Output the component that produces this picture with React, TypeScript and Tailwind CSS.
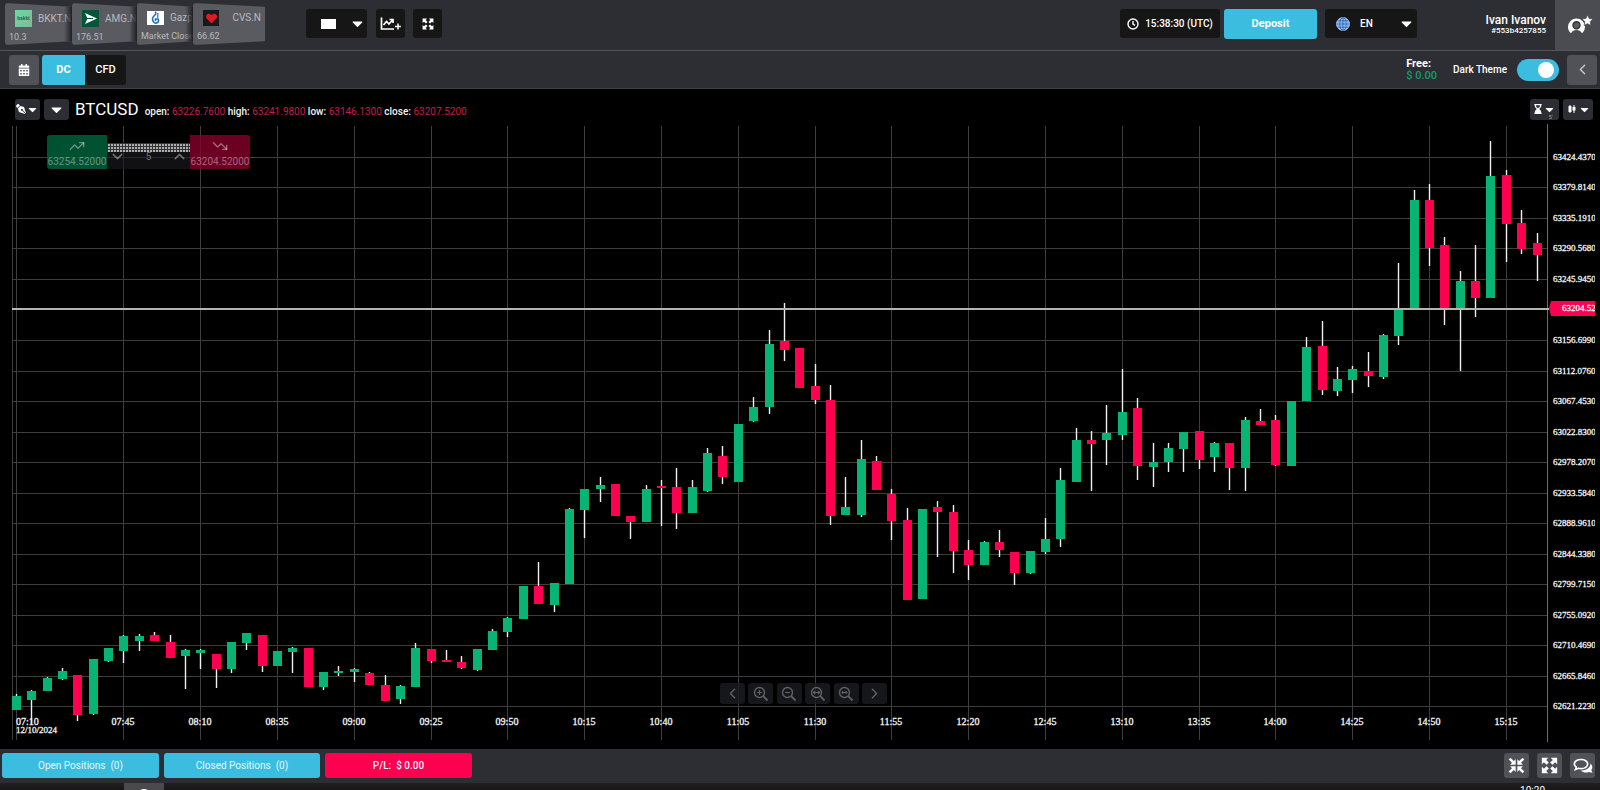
import type { ReactNode } from "react";
import { ChevronLeft, ChevronRight, ChevronDown, ChevronUp, TrendingDown, TrendingUp } from "lucide-react";
import { FaCalendarAlt, FaCaretDown, FaHeart, FaHourglassEnd, FaPenNib } from "react-icons/fa";
import { MdCandlestickChart } from "react-icons/md";

type Candle = ["G" | "R", number, number, number, number];

// Five-minute candles in chart units: colour, wick top, body top, body bottom, wick bottom.
const candles: Candle[] = [
  ["G", 694, 696, 710, 710], ["G", 690, 691, 700, 724], ["G", 677, 678, 691, 691], ["G", 668, 671, 679, 680],
  ["R", 675, 675, 715, 721], ["G", 659, 659, 714, 715], ["G", 648, 648, 661, 662], ["G", 635, 636, 651, 663],
  ["G", 634, 636, 641, 651], ["R", 632, 635, 641, 641], ["R", 635, 642, 658, 658], ["G", 649, 650, 656, 689],
  ["G", 649, 650, 653, 669], ["R", 654, 654, 669, 688], ["G", 642, 642, 669, 673], ["G", 633, 633, 643, 650],
  ["R", 635, 635, 666, 672], ["G", 651, 651, 666, 666], ["G", 647, 648, 652, 673], ["R", 648, 648, 687, 687],
  ["G", 672, 672, 687, 690], ["G", 666, 671, 673, 676], ["G", 668, 669, 672, 682], ["R", 672, 673, 685, 685],
  ["R", 675, 685, 701, 701], ["G", 685, 686, 699, 704], ["G", 643, 648, 687, 687], ["R", 649, 649, 661, 663],
  ["R", 650, 660, 662, 662], ["R", 656, 662, 668, 669], ["G", 649, 649, 670, 671], ["G", 629, 631, 650, 650],
  ["G", 617, 618, 632, 637], ["G", 586, 586, 619, 619], ["R", 562, 586, 604, 604], ["G", 583, 583, 605, 612],
  ["G", 508, 509, 584, 584], ["G", 489, 489, 510, 538], ["G", 477, 485, 489, 502], ["R", 484, 484, 516, 516],
  ["R", 516, 516, 522, 539], ["G", 485, 489, 522, 522], ["R", 480, 486, 488, 526], ["R", 468, 487, 513, 529],
  ["G", 480, 487, 513, 513], ["G", 448, 453, 491, 492], ["R", 446, 456, 477, 484], ["G", 424, 424, 482, 482],
  ["G", 397, 407, 421, 422], ["G", 330, 344, 407, 414], ["R", 303, 341, 350, 361], ["R", 348, 348, 388, 388],
  ["R", 364, 386, 400, 404], ["R", 385, 400, 516, 525], ["G", 477, 507, 515, 515], ["G", 440, 459, 515, 517],
  ["R", 456, 461, 490, 490], ["R", 489, 494, 521, 540], ["R", 508, 520, 600, 600], ["G", 509, 509, 599, 599],
  ["R", 501, 507, 512, 557], ["R", 505, 512, 551, 573], ["R", 540, 550, 565, 580], ["G", 541, 542, 565, 565],
  ["R", 530, 542, 550, 557], ["R", 552, 552, 573, 585], ["G", 551, 551, 573, 574], ["G", 518, 539, 552, 554],
  ["G", 468, 480, 539, 547], ["G", 428, 440, 482, 482], ["R", 431, 440, 444, 491], ["G", 405, 433, 440, 465],
  ["G", 369, 412, 435, 440], ["R", 398, 408, 466, 480], ["G", 443, 462, 467, 487], ["G", 443, 448, 462, 472],
  ["G", 432, 432, 449, 472], ["R", 431, 431, 460, 469], ["G", 442, 443, 457, 472], ["R", 443, 443, 468, 490],
  ["G", 417, 420, 468, 491], ["R", 409, 421, 425, 425], ["R", 415, 420, 465, 466], ["G", 401, 401, 466, 466],
  ["G", 337, 347, 401, 401], ["R", 321, 346, 390, 395], ["G", 367, 379, 391, 396], ["G", 366, 369, 380, 393],
  ["R", 352, 371, 376, 387], ["G", 334, 335, 377, 379], ["G", 263, 309, 336, 345], ["G", 190, 200, 309, 309],
  ["R", 184, 200, 248, 266], ["R", 237, 245, 310, 325], ["G", 271, 281, 309, 371], ["R", 245, 281, 298, 317],
  ["G", 141, 176, 298, 298], ["R", 170, 175, 224, 262], ["R", 210, 223, 249, 254], ["R", 233, 243, 255, 281],
];

const times = [
  "07:45", "08:10", "08:35", "09:00", "09:25", "09:50", "10:15", "10:40", "11:05", "11:30",
  "11:55", "12:20", "12:45", "13:10", "13:35", "14:00", "14:25", "14:50", "15:15",
];

const prices = [
  "63424.4370", "63379.8140", "63335.1910", "63290.5680", "63245.9450", "", "63156.6990", "63112.0760", "63067.4530",
  "63022.8300", "62978.2070", "62933.5840", "62888.9610", "62844.3380", "62799.7150", "62755.0920", "62710.4690",
  "62665.8460", "62621.2230",
];

const candleX = (i: number) => Math.round(15.9 + i * 15.36);
const priceY = (i: number) => Math.round(156.9 + i * 30.53);

function Chart() {
  return (
    <svg viewBox="0 123 1600 626" className="block h-auto w-full font-['Liberation_Serif',serif]" role="img" aria-label="BTCUSD candlestick chart">
      <defs>
        <clipPath id="priceScale">
          <rect x="1548" y="123" width="47" height="626" />
        </clipPath>
      </defs>
      <g fill="#3e3e3e">
        <rect x="12" y="126" width="1" height="614" />
        <rect x="16" y="126" width="1" height="614" />
        {times.map((t, i) => (
          <rect key={t} x={candleX(7 + i * 5)} y="126" width="1" height="614" />
        ))}
        {prices.map((p, i) => (p ? <rect key={p} x="12" y={priceY(i)} width="1535" height="1" /> : null))}
      </g>
      <rect x="1547" y="124" width="1" height="618" fill="#66707a" />
      {candles.map(([c, high, top, bottom, low], i) => (
        <g key={i}>
          <rect x={candleX(i) - 0.2} y={high} width="1.4" height={low - high} fill="#f0f0f0" />
          <rect x={candleX(i) - 4} y={top} width="9" height={bottom - top} fill={c === "G" ? "#08b374" : "#ff0050"} />
        </g>
      ))}
      <rect x="12" y="308" width="1537" height="2" fill="#b4b4b4" />
      <g fill="#f4f4f4" stroke="#f4f4f4" strokeWidth="0.3" fontSize="10">
        <text x="16" y="725">07:10</text>
        <text x="16" y="733" fontSize="9">12/10/2024</text>
        {times.map((t, i) => (
          <text key={t} x={candleX(7 + i * 5)} y="725" textAnchor="middle">{t}</text>
        ))}
        <g clipPath="url(#priceScale)" fontSize="9">
          {prices.map((p, i) => (p ? <text key={p} x="1553" y={priceY(i) + 3}>{p}</text> : null))}
          <path d="M1549 308l2-7h44v15h-44z" fill="#ff0050" stroke="none" />
          <text x="1562" y="311">63204.52</text>
        </g>
      </g>
    </svg>
  );
}

function Ticker({ logo, symbol, value, className, last = false }: { logo: ReactNode; symbol: string; value: string; className: string; last?: boolean }) {
  return (
    <a href="#" className={"relative h-[42px] overflow-hidden rounded-[3px] bg-[#595b60] text-[#b9babd] [clip-path:polygon(0_0,100%_9%,100%_91%,0_100%)] " + className}>
      <span className="flex items-center pt-[7px] pl-[10px] text-[10px] leading-4">
        {logo}
        <span className={"min-w-0 flex-1 whitespace-nowrap " + (last ? "pr-1 text-right" : "pl-[6px]")}>{symbol}</span>
      </span>
      <span className="block pt-[2px] pl-[4px] text-[9px] leading-4 whitespace-nowrap">{value}</span>
      {!last && <span className="absolute inset-y-0 right-0 w-2 bg-linear-to-r from-transparent to-[#1e1f22]" />}
    </a>
  );
}

function Arrows({ inward = false, className }: { inward?: boolean; className: string }) {
  const corner = inward ? "M9 9H2.500l2.200-2.200L.8 2.900 2.900.8l3.900 3.900L9 2.500z" : "M1 1h7.500L6.100 3.400 9.200 6.500 6.500 9.200 3.400 6.100 1 8.500z";
  return (
    <svg viewBox="0 0 20 20" fill="currentColor" className={className} aria-hidden="true">
      <path d={corner} />
      <path d={corner} transform="matrix(-1 0 0 1 20 0)" />
      <path d={corner} transform="matrix(1 0 0 -1 0 20)" />
      <path d={corner} transform="matrix(-1 0 0 -1 20 20)" />
    </svg>
  );
}

function Magnifier({ sign }: { sign: string }) {
  return (
    <svg viewBox="0 0 16 16" fill="none" stroke="currentColor" className="size-4" aria-hidden="true">
      <circle cx="6.500" cy="6.500" r="5" strokeWidth="1.400" />
      <path d="M10.200 10.200l4.300 4.300" strokeWidth="1.800" />
      <path d={sign} strokeWidth="1.200" />
    </svg>
  );
}

const magnifiers = [
  { label: "Zoom in", sign: "M4 6.500h5M6.500 4v5" },
  { label: "Zoom out", sign: "M4 6.500h5" },
  { label: "Fit width", sign: "M3.500 6.500h6M5 5L3.500 6.500 5 8M8 5l1.500 1.500L8 8" },
  { label: "Reset zoom", sign: "M3.500 6.500h6M4.800 5v3M8.200 5v3" },
];

const navButton = "flex h-[21px] w-[25px] items-center justify-center rounded-[3px] bg-[#1c1d20]/80 text-[#606164]";
const smallButton = "flex h-[21px] items-center justify-center rounded-[3px] bg-[#2d2e33]";
const footerIcon = "flex size-[25px] items-center justify-center rounded-[3px] bg-[#505258]";
const darkBox = "flex h-[29px] items-center justify-center rounded-[3px] bg-[#161616]";
const quote = "font-normal text-[#c41f46]";

export default function App() {
  return (
    <div className="flex min-h-screen flex-col bg-black font-['Roboto',sans-serif] text-white">
      <header className="flex h-[51px] items-stretch border-b border-[#55565a] bg-[#2d2e33]">
        <nav aria-label="Quotes" className="flex items-start pt-[3px] pl-[5px]">
          <Ticker className="w-[67px]" symbol="BKKT.N" value="10.3" logo={<span className="flex size-[17px] shrink-0 items-center justify-center bg-linear-to-br from-[#63dca0] to-[#86b59d] text-[5px] leading-none font-bold text-[#256b4a]">bakkt</span>} />
          <Ticker className="w-[65px]" symbol="AMG.N" value="176.51" logo={
            <svg viewBox="0 0 17 17" className="size-[17px] shrink-0"><rect width="17" height="17" fill="#06553b" /><path d="M3 3l12 5.500L3 14l2.500-5.500z" fill="#fff" /><path d="M5 8.500h6" stroke="#06553b" /></svg>
          } />
          <Ticker className="w-[56px]" symbol="Gazp" value="Market Close" logo={
            <svg viewBox="0 0 17 14" className="h-[14px] w-[17px] shrink-0"><rect width="17" height="14" fill="#fff" /><path d="M8 1c2 1.500 0 3-1.500 4.500C5 7 5 11 8 12c3 .5 4.500-2 3-4H8.500v2" stroke="#1c75bc" strokeWidth="1.600" fill="none" /><path d="M10.800 2v5" stroke="#1c75bc" strokeWidth="1.200" /></svg>
          } />
          <Ticker last className="w-[72px]" symbol="CVS.N" value="66.62" logo={<span className="flex size-4 shrink-0 items-center justify-center bg-[#17191c]"><FaHeart className="size-[11px] text-[#dd1b22]" /></span>} />
        </nav>

        <div className="ml-[41px] flex items-start gap-2 pt-[9px]">
          <button type="button" aria-label="Chart colour" className={darkBox + " w-[61px] gap-[13px] pl-[13px]"}>
            <span className="h-[10px] w-[15px] bg-white" />
            <FaCaretDown className="size-[17px]" />
          </button>
          <button type="button" aria-label="Add indicator" className={darkBox + " ml-px w-[29px]"}>
            <svg viewBox="0 0 22 16" className="h-4 w-[22px]" fill="none" stroke="currentColor" strokeWidth="1.700" aria-hidden="true">
              <path d="M1.500 1.500v11.500h12.500" /><path d="M3.500 9l3-3.500 2.500 2.500 3.500-4" /><path d="M9.500 3.500h3.500v3.500" /><path d="M15 10.500h6M18 7.500v6" strokeWidth="1.500" />
            </svg>
          </button>
          <button type="button" aria-label="Full screen" className={darkBox + " w-[29px]"}><Arrows className="size-3" /></button>
        </div>

        <div className="ml-auto flex items-start pt-[9px]">
          <div className={darkBox + " w-[100px] gap-[6px]"}>
            <svg viewBox="0 0 12 12" className="size-3" fill="none" stroke="currentColor" strokeWidth="1.400" aria-hidden="true"><circle cx="6" cy="6" r="5" /><path d="M6 3v3.200l2 1.200" /></svg>
            <time className="text-[10px] font-medium">15:38:30 (UTC)</time>
          </div>
          <button type="button" className="ml-1 h-[30px] w-[93px] rounded-[3px] bg-[#3bbddf] text-[11px] font-bold">Deposit</button>
          <div className={darkBox + " relative ml-2 w-[92px]"}>
            <svg viewBox="0 0 14 14" className="pointer-events-none absolute left-[11px] size-[14px]" fill="#8fbcf5" stroke="#2c5fa8" strokeWidth="0.800" aria-hidden="true">
              <circle cx="7" cy="7" r="6.500" stroke="#a9cbf7" /><ellipse cx="7" cy="7" rx="3.200" ry="6.500" fill="none" /><path d="M7 .5v13M.5 7h13M1.500 3.800h11M1.500 10.200h11" />
            </svg>
            <select aria-label="Language" defaultValue="EN" className="size-full appearance-none bg-transparent pl-[35px] text-[10px] font-medium">
              <option>EN</option>
            </select>
            <FaCaretDown className="pointer-events-none absolute right-[2px] size-[17px]" />
          </div>
          <div className="ml-[68px] flex w-[61px] flex-col items-end pt-[5px] whitespace-nowrap">
            <span className="text-[12px] leading-3 font-medium">Ivan Ivanov</span>
            <span className="text-[8px] leading-[9px] font-medium">#553b4257855</span>
          </div>
        </div>
        <button type="button" aria-label="Account" className="ml-[9px] flex w-[45px] items-center justify-center bg-[#4b4c51] pl-1">
          <svg viewBox="0 0 26 20" className="h-5 w-[26px]" aria-hidden="true">
            <path d="M9.500 3.500A8.500 8.500 0 0 0 1 12c0 2.300.9 4.300 2.300 5.800h12.400A8.500 8.500 0 0 0 18 12a8.500 8.500 0 0 0-8.500-8.500z" fill="#fff" />
            <path d="M4.500 18c.8-2.200 2.600-3 5-3s4.200.8 5 3z" fill="#4b4c51" />
            <circle cx="9.500" cy="10.300" r="3.500" fill="#5c5d62" stroke="#2f3035" strokeWidth="1.400" />
            <path d="M20.500 0l1.700 3.500 3.800.5-2.800 2.700.7 3.800-3.400-1.800-3.400 1.800.7-3.800L15 4l3.800-.5z" fill="#fff" stroke="#4b4c51" strokeWidth="0.800" />
          </svg>
        </button>
      </header>

      <div className="flex h-[38px] items-center border-b border-[#404145] bg-[#2d2e33] pr-[3px] pl-[9px]">
        <button type="button" aria-label="Calendar" className="flex size-[30px] items-center justify-center rounded-[3px] bg-[#505258]">
          <FaCalendarAlt className="size-3" />
        </button>
        <div className="ml-[3px] flex h-[30px] overflow-hidden rounded-[3px] text-[11px]">
          <button type="button" aria-pressed="true" className="w-[43px] bg-[#3bbddf] pt-px font-bold">DC</button>
          <button type="button" aria-pressed="false" className="w-[41px] bg-[#161616] pt-px font-medium">CFD</button>
        </div>
        <div className="ml-auto flex flex-col text-[11px] leading-3 font-bold">
          <span>Free:</span>
          <span className="font-medium text-[#159c67]">$ 0.00</span>
        </div>
        <label htmlFor="theme" className="ml-4 text-[10px] font-medium">Dark Theme</label>
        <input id="theme" type="checkbox" role="switch" defaultChecked className="ml-[10px] h-[22px] w-[42px] appearance-none rounded-full bg-[#55575c] p-[3px] before:block before:size-4 before:rounded-full before:bg-white before:content-[''] checked:bg-[#3bbddf] checked:before:ml-[18px]" />
        <button type="button" aria-label="Collapse panel" className="ml-2 flex size-[30px] items-center justify-center rounded-[3px] bg-[#505258] text-[#c8c9cb]">
          <ChevronLeft className="size-[17px]" />
        </button>
      </div>

      <main className="flex flex-1 flex-col">
        <div className="flex h-[34px] items-center pt-[6px] pr-[7px] pl-[15px]">
          <button type="button" aria-label="Drawing tools" className={smallButton + " w-[25px]"}><FaPenNib className="size-[10px] -scale-x-100" /><FaCaretDown className="size-[13px]" /></button>
          <button type="button" aria-label="Choose instrument" className={smallButton + " ml-1 w-[25px]"}><FaCaretDown className="size-[17px]" /></button>
          <h1 className="ml-[6px] text-[17px] leading-5">BTCUSD</h1>
          <p className="ml-[6px] pt-[5px] text-[10px] leading-3 font-medium whitespace-nowrap text-[#f2f2f2]">
            open: <span className={quote}>63226.7600</span> high: <span className={quote}>63241.9800</span> low:{" "}
            <span className={quote}>63146.1300</span> close: <span className={quote}>63207.5200</span>
          </p>
          <button type="button" aria-label="Time frame, 5 minutes" className={smallButton + " relative ml-auto w-[29px]"}>
            <FaHourglassEnd className="size-[10px]" /><FaCaretDown className="size-[13px]" />
            <span className="absolute right-[6px] bottom-0 text-[6px] leading-[7px] text-[#a0a0a0]">5'</span>
          </button>
          <button type="button" aria-label="Chart type" className={smallButton + " ml-1 w-[30px]"}><MdCandlestickChart className="size-3" /><FaCaretDown className="size-[13px]" /></button>
        </div>

        <div className="relative">
          <Chart />
          <div className="absolute top-3 left-[47px] flex h-[34px] items-stretch text-[10px] leading-3 text-white/40">
            <button type="button" className="flex w-[60px] flex-col items-center justify-between rounded-l-[3px] bg-[#00643e]/80 pt-[3px] pb-px">
              <TrendingUp className="size-4" strokeWidth={2} />
              <span>63254.52000</span>
            </button>
            <div className="flex w-[83px] flex-col">
              <span className="mt-2 h-[9px] bg-[#b0b0b0] bg-[linear-gradient(#333_1px,transparent_1px),linear-gradient(90deg,#333_1px,transparent_1px)] bg-[size:3px_3px]" />
              <div className="flex flex-1 items-start justify-between bg-[#1c1d20]/60 px-[2px]">
                <button type="button" aria-label="Decrease amount"><ChevronDown className="-mt-1 size-[17px]" /></button>
                <input aria-label="Amount" defaultValue="5" className="h-[10px] w-6 bg-transparent text-center text-[10px] text-white/40" />
                <button type="button" aria-label="Increase amount"><ChevronUp className="-mt-1 size-[17px]" /></button>
              </div>
            </div>
            <button type="button" className="flex w-[60px] flex-col items-center justify-between rounded-r-[3px] bg-[#87002c]/80 pt-[3px] pb-px">
              <TrendingDown className="size-4" strokeWidth={2} />
              <span>63204.52000</span>
            </button>
          </div>
          <div className="pointer-events-none absolute inset-x-0 bottom-[45px] flex justify-center pl-[7px]">
            <div className="pointer-events-auto flex w-[167px] justify-between">
              <button type="button" aria-label="Scroll left" className={navButton}><ChevronLeft className="size-[17px]" /></button>
              {magnifiers.map((m) => (
                <button key={m.label} type="button" aria-label={m.label} className={navButton}><Magnifier sign={m.sign} /></button>
              ))}
              <button type="button" aria-label="Scroll right" className={navButton}><ChevronRight className="size-[17px]" /></button>
            </div>
          </div>
        </div>
      </main>

      <footer className="flex h-[34px] items-start bg-[#2d2e33] pt-1 pr-[5px] pl-[2px] text-[10px] text-[#e6f7fc]">
        <button type="button" className="h-[25px] w-[157px] rounded-[3px] bg-[#3bbddf]">Open Positions &nbsp;(0)</button>
        <button type="button" className="ml-[5px] h-[25px] w-[156px] rounded-[3px] bg-[#3bbddf]">Closed Positions &nbsp;(0)</button>
        <button type="button" className="ml-[5px] h-[25px] w-[147px] rounded-[3px] bg-[#ff0050] font-medium">P/L: &nbsp;$ 0.00</button>
        <div className="ml-auto flex gap-2 text-white">
          <button type="button" aria-label="Compress" className={footerIcon}><Arrows inward className="size-[17px]" /></button>
          <button type="button" aria-label="Expand" className={footerIcon}><Arrows className="size-[17px]" /></button>
          <button type="button" aria-label="Chat" className={footerIcon}>
            <svg viewBox="0 0 20 16" className="h-4 w-5" aria-hidden="true">
              <path d="M17.500 5.500a5 5 0 0 1 .8 6.500l1.200 2.700-3.500-.8c-3 1.200-6.500.5-8-1.500 5 .2 9.500-2.600 9.500-6.900z" fill="currentColor" />
              <path d="M8 1.500c3.800 0 6.700 2 6.700 4.600S11.800 10.700 8 10.700c-.9 0-1.800-.1-2.500-.4L2.500 11.500l.8-2.400C2 8.300 1.300 7.300 1.300 6.100 1.300 3.500 4.200 1.500 8 1.500z" fill="none" stroke="currentColor" strokeWidth="1.700" />
            </svg>
          </button>
        </div>
      </footer>
      <div className="flex h-[7px] items-start overflow-hidden bg-linear-to-b from-[#1f1f22] to-[#191616] pl-[124px] text-[10px] leading-3">
        <span className="flex h-[7px] w-10 justify-center overflow-hidden bg-[#4b494b]"><span className="mt-[6px] size-[14px] shrink-0 rounded-full bg-white" /></span>
        <span className="mt-[2px] mr-[55px] ml-auto">10:20</span>
      </div>
    </div>
  );
}
